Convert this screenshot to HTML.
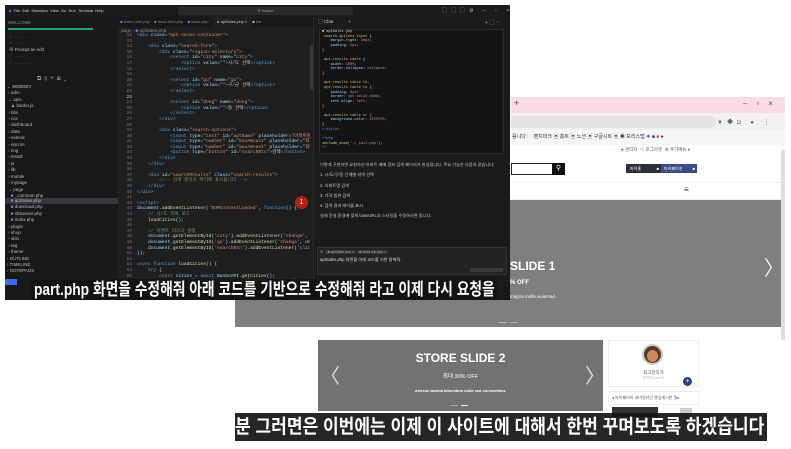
<!DOCTYPE html>
<html><head><meta charset="utf-8"><style>
*{margin:0;padding:0;box-sizing:border-box}
body{width:791px;height:449px;background:#fff;position:relative;overflow:hidden;font-family:"Liberation Sans","Noto Sans CJK KR",sans-serif}
.a{position:absolute}
.code{font-family:"Liberation Mono",monospace;font-size:4.6px;line-height:5.6px;white-space:pre;color:#9cdcfe}
.t{color:#569cd6}.s{color:#ce9178}.c{color:#6a9955}.y{color:#dcdcaa}.w{color:#ccc}.o{color:#d7ba7d}
.sub{background:rgba(20,20,20,.92);color:#fff;font-weight:bold;white-space:nowrap;overflow:hidden}
.sub span{display:inline-block;transform-origin:0 50%}
.tree{font-size:4.5px;color:#bbb;line-height:6.4px;white-space:pre}
</style></head><body>

<div class="a" style="left:511px;top:97px;width:274px;height:16px;background:#f8dbe6"></div>
<div class="a" style="left:514px;top:98px;font-size:9px;color:#444">+</div>
<div class="a" style="left:743px;top:99px;font-size:8px;color:#555;letter-spacing:9px">–▫×</div>
<div class="a" style="left:511px;top:113px;width:274px;height:17px;background:#f1f1f1"></div>
<div class="a" style="left:511px;top:116px;width:205px;height:12px;background:#e4e4e4;border-radius:0 6px 6px 0"></div>
<div class="a" style="left:717px;top:117px;font-size:6px;color:#666;letter-spacing:4px">▼◆◘ ● ⋮</div>
<div class="a" style="left:511px;top:130px;width:274px;height:15px;background:#f6f6f6"></div>
<div class="a" style="left:512px;top:133px;font-size:5px;color:#333">음니다 🗀 벤치마크 ▣ 홈트 ▣ 노션 ▣ 구글시트 ▣ ◉ 모리스탭 <span style="color:#36c">✦</span> <span style="color:#236">■</span> <span style="color:#e46">■</span> <span style="color:#236">●</span></div>
<div class="a" style="left:235px;top:145px;width:546px;height:55px;background:#fff;border-bottom:1px solid #eee"></div>
<div class="a" style="left:621px;top:147px;font-size:4.5px;color:#555"><span style="color:#c33">●</span> 관리자 &nbsp;⇨ 로그아웃 &nbsp;⚙ 추가메뉴 ▾</div>
<div class="a" style="left:511px;top:163px;width:41px;height:12px;border:1px solid #222;border-right:none"></div>
<div class="a" style="left:552px;top:163px;width:13px;height:12px;background:#111;color:#fff;font-size:7px;text-align:center;line-height:12px">⚲</div>
<div class="a" style="left:626px;top:164px;width:35px;height:9px;background:#2a2f3a;color:#fff;font-size:4px;line-height:9px;padding-left:4px">마이홈 <span style="float:right;margin-right:2px">■</span></div>
<div class="a" style="left:661px;top:164px;width:36px;height:9px;background:#3c4a8a;color:#fff;font-size:4px;line-height:9px;padding-left:3px">마이페이지 <span style="float:right;margin-right:2px">■</span></div>
<div class="a" style="left:511px;top:182px;width:270px;height:1px;background:#eee"></div>
<div class="a" style="left:684px;top:185px;font-size:8px;color:#333">≡</div>
<div class="a" style="left:781px;top:150px;width:4px;height:190px;background:#ddd"></div>
<div class="a" style="left:235px;top:200px;width:546px;height:127px;background:#7f7f7f"></div>
<div class="a" style="left:510px;top:259px;font-size:12px;color:#fff;font-weight:bold">SLIDE 1</div>
<div class="a" style="left:510px;top:280px;font-size:6px;color:#fff;font-weight:bold">% OFF</div>
<div class="a" style="left:510px;top:294px;font-size:4.5px;color:#fff">magna mollis euismod.</div>
<div class="a" style="left:764px;top:252px;font-size:20px;color:#eee">〉</div>
<div class="a" style="left:499px;top:322px;width:8px;height:1px;background:#bbb"></div>
<div class="a" style="left:510px;top:322px;width:8px;height:1px;background:#aaa"></div>

<div class="a" style="left:318px;top:340px;width:285px;height:71px;background:#727272"></div>
<div class="a" style="left:318px;top:351px;width:285px;text-align:center;font-size:12px;color:#fff;font-weight:bold">STORE SLIDE 2</div>
<div class="a" style="left:318px;top:372px;width:285px;text-align:center;font-size:5.5px;color:#fff">최대 30% OFF</div>
<div class="a" style="left:318px;top:388px;width:285px;text-align:center;font-size:4px;color:#fff;font-weight:bold">Aenean lacinia bibendum nulla sed consectetur.</div>
<div class="a" style="left:320px;top:360px;font-size:20px;color:#ddd">〈</div>
<div class="a" style="left:585px;top:360px;font-size:20px;color:#ddd">〉</div>
<div class="a" style="left:451px;top:405px;width:7px;height:1px;background:#aaa"></div>
<div class="a" style="left:461px;top:405px;width:7px;height:1px;background:#eee"></div>

<div class="a" style="left:608px;top:340px;width:91px;height:47px;border:1px solid #eee;background:#fff"></div>
<div class="a" style="left:642px;top:344px;width:21px;height:21px;border-radius:50%;background:#5a3a2a;border:2px solid #ccc"></div>
<div class="a" style="left:647px;top:350px;width:11px;height:12px;border-radius:50%;background:#c98a5e"></div>
<div class="a" style="left:608px;top:370px;width:91px;text-align:center;font-size:4.5px;color:#555">최고관리자</div>
<div class="a" style="left:608px;top:376px;width:91px;text-align:center;font-size:3.5px;color:#aaa">관리자 Level 1</div>
<div class="a" style="left:683px;top:377px;width:9px;height:9px;border-radius:50%;background:#2f3f7e;color:#fff;font-size:7px;text-align:center;line-height:9px">+</div>
<div class="a" style="left:608px;top:391px;width:91px;height:14px;border:1px solid #eee;font-size:4px;color:#555;line-height:12px;padding-left:3px">◂ 마이페이지 내미일라인 관심게시판 질▸</div>
<div class="a" style="left:612px;top:407px;width:46px;height:10px;background:#333"></div>
<div class="a" style="left:680px;top:408px;width:12px;height:10px;background:#ccc"></div>

<div class="a" style="left:5px;top:5px;width:505px;height:295px;background:#1f1f1f"></div>
<div class="a" style="left:5px;top:5px;width:505px;height:12px;background:#1b1b1b;font-size:4px;color:#ccc;line-height:12px;padding-left:4px"><span style="color:#3c8cf0">■</span>&nbsp; File &nbsp;Edit &nbsp;Selection &nbsp;View &nbsp;Go &nbsp;Run &nbsp;Terminal &nbsp;Help</div>
<div class="a" style="left:178px;top:7px;width:175px;height:8px;background:#2a2a2a;border-radius:2px;font-size:4px;color:#999;text-align:center;line-height:8px">⚲ fodaco</div>
<div class="a" style="left:442px;top:7px;font-size:5px;color:#bbb;letter-spacing:4px">▢▢▢⚙ – ▫ ×</div>
<div class="a" style="left:5px;top:17px;width:113px;height:270px;background:#181818"></div>
<div class="a" style="left:8px;top:28px;width:85px;height:1.5px;background:#2aa37a"></div>
<div class="a tree" style="left:8px;top:20px;color:#888">WELCOME</div>
<div class="a tree" style="left:9px;top:34px;color:#555">✓ ...... ......<br>✓ ........<br><span style="color:#bbb">⊕ Prompt an edit</span><br>✓ ........<br>✓ ........ ........</div>
<div class="a" style="left:37px;top:76px;font-size:6px;color:#aaa;letter-spacing:3px">⧉⚲⑂⊞⌄</div>
<div class="a tree" style="left:7px;top:84px">⌄ WEBDEV
 › adm
 ⌄ apis
   ▲ banbo.js
 › bbs
 › css
 › dashboard
 › data
 › extend
 › epcom
 › img
 › install
 › js
 › lib
 › mobile
 › mypage
 ⌄ page
   <span style="color:#a074c4">■</span> _common.php</div>
<div class="a" style="left:5px;top:198px;width:113px;height:6px;background:#37373d"></div>
<div class="a tree" style="left:7px;top:198px">   <span style="color:#a074c4">■</span> aptSales.php
   <span style="color:#a074c4">■</span> download.php
   <span style="color:#a074c4">■</span> sbbanner.php
   <span style="color:#a074c4">■</span> index.php
 › plugin
 › shop
 › skin
 › tag
 › theme
› OUTLINE
› TIMELINE
› NOTEPADS</div>
<div class="a" style="left:118px;top:17px;width:195px;height:10px;background:#181818;font-size:4px;color:#888;line-height:10px;white-space:nowrap;overflow:hidden">&nbsp; <span style="color:#a074c4">■</span> index.html.php &nbsp;&nbsp; <span style="color:#a074c4">■</span> head.html.php &nbsp;&nbsp; <span style="color:#a074c4">■</span> index.php &nbsp;&nbsp; <span style="background:#1f1f1f;color:#ccc;padding:3px 4px"><span style="color:#a074c4">■</span> aptSales.php ×</span> <span style="color:#e2c08d">■</span> bar</div>
<div class="a code" style="left:121px;top:28px;color:#888;font-family:'Liberation Sans'">page › <span style="color:#a074c4">■</span> aptSales.php</div>
<div class="a code" style="left:120px;top:33px;color:#6e7681;text-align:right;width:12px">12
13
14
15
16
17
18
19
20
21
22
<span style="color:#ccc">23</span>
24
25
26
27
28
29
30
31
32
33
34
35
36
37
38
39
40
41
42
43
44
45
46
47
48
49
50
51
52
53
54
55</div>
<div class="a code" style="left:137px;top:33px;width:173px;overflow:hidden"><span class="t">&lt;div</span> class=<span class="s">"apt-sales-container"</span><span class="t">&gt;</span>

    <span class="t">&lt;div</span> class=<span class="s">"search-form"</span><span class="t">&gt;</span>
        <span class="t">&lt;div</span> class=<span class="s">"region-selectors"</span><span class="t">&gt;</span>
            <span class="t">&lt;select</span> id=<span class="s">"city"</span> name=<span class="s">"city"</span><span class="t">&gt;</span>
                <span class="t">&lt;option</span> value=<span class="s">""</span><span class="t">&gt;</span><span class="w">시/도 선택</span><span class="t">&lt;/option&gt;</span>
            <span class="t">&lt;/select&gt;</span>

            <span class="t">&lt;select</span> id=<span class="s">"gu"</span> name=<span class="s">"gu"</span><span class="t">&gt;</span>
                <span class="t">&lt;option</span> value=<span class="s">""</span><span class="t">&gt;</span><span class="w">구/군 선택</span><span class="t">&lt;/option&gt;</span>
            <span class="t">&lt;/select&gt;</span>

            <span class="t">&lt;select</span> id=<span class="s">"dong"</span> name=<span class="s">"dong"</span><span class="t">&gt;</span>
                <span class="t">&lt;option</span> value=<span class="s">""</span><span class="t">&gt;</span><span class="w">동 선택</span><span class="t">&lt;/option&gt;</span>
            <span class="t">&lt;/select&gt;</span>
        <span class="t">&lt;/div&gt;</span>

        <span class="t">&lt;div</span> class=<span class="s">"search-options"</span><span class="t">&gt;</span>
            <span class="t">&lt;input</span> type=<span class="s">"text"</span> id=<span class="s">"aptName"</span> placeholder=<span class="s">"아파트명"</span><span class="t">&gt;</span>
            <span class="t">&lt;input</span> type=<span class="s">"number"</span> id=<span class="s">"minAmount"</span> placeholder=<span class="s">"최소금액"</span><span class="t">&gt;</span>
            <span class="t">&lt;input</span> type=<span class="s">"number"</span> id=<span class="s">"maxAmount"</span> placeholder=<span class="s">"최대금액"</span><span class="t">&gt;</span>
            <span class="t">&lt;button</span> type=<span class="s">"button"</span> id=<span class="s">"searchBtn"</span><span class="t">&gt;</span><span class="w">검색</span><span class="t">&lt;/button&gt;</span>
        <span class="t">&lt;/div&gt;</span>
    <span class="t">&lt;/div&gt;</span>

    <span class="t">&lt;div</span> id=<span class="s">"searchResults"</span> class=<span class="s">"search-results"</span><span class="t">&gt;</span>
        <span class="c">&lt;!-- 검색 결과가 여기에 표시됩니다 --&gt;</span>
    <span class="t">&lt;/div&gt;</span>
<span class="t">&lt;/div&gt;</span>

<span class="t">&lt;script&gt;</span>
document.<span class="y">addEventListener</span>(<span class="s">'DOMContentLoaded'</span>, <span class="t">function</span>() {
    <span class="c">// 시/도 목록 로드</span>
    <span class="y">loadCities</span>();

    <span class="c">// 이벤트 리스너 설정</span>
    document.<span class="y">getElementById</span>(<span class="s">'city'</span>).<span class="y">addEventListener</span>(<span class="s">'change'</span>, onCityChange);
    document.<span class="y">getElementById</span>(<span class="s">'gu'</span>).<span class="y">addEventListener</span>(<span class="s">'change'</span>, onGuChange);
    document.<span class="y">getElementById</span>(<span class="s">'searchBtn'</span>).<span class="y">addEventListener</span>(<span class="s">'click'</span>, searchApts
});

<span class="t">async function</span> <span class="y">loadCities</span>() {
    <span class="t">try</span> {
        <span class="t">const</span> cities = <span class="t">await</span> BanboAPI.<span class="y">getCities</span>();
        <span class="t">const</span> citySelect = document.<span class="y">getElementById</span>(<span class="s">'city'</span>);</div>
<div class="a" style="left:295px;top:196px;width:13px;height:13px;border-radius:50%;background:#b2221b;color:#fff;font-size:7px;text-align:center;line-height:13px">1</div>
<div class="a" style="left:310px;top:45px;width:3px;height:45px;background:#3a3a3a"></div>
<div class="a" style="left:313px;top:17px;width:197px;height:270px;background:#1b1b1b;border-left:1px solid #2b2b2b"></div>
<div class="a" style="left:318px;top:19px;font-size:4.5px;color:#ccc">▢ Chat &nbsp;&nbsp;&nbsp;&nbsp;&nbsp;&nbsp;&nbsp;&nbsp;&nbsp;&nbsp; ×</div>
<div class="a" style="left:485px;top:19px;font-size:5px;color:#aaa">+ ▢ ⋯</div>
<div class="a" style="left:319px;top:29px;width:185px;height:125px;background:#141414;border:1px solid #2a2a2a"></div>
<div class="a code" style="left:322px;top:30px;font-size:3.6px;line-height:4.65px"><span class="w">■ aptSales.php</span>
<span class="o">.search-options input</span> {
    margin-right: <span class="s">10px</span>;
    padding: <span class="s">5px</span>;
}

<span class="o">.apt-results table</span> {
    width: <span class="s">100%</span>;
    border-collapse: <span class="s">collapse</span>;
}

<span class="o">.apt-results table th</span>,
<span class="o">.apt-results table td</span> {
    padding: <span class="s">8px</span>;
    border: <span class="s">1px solid #ddd</span>;
    text-align: <span class="s">left</span>;
}

<span class="o">.apt-results table tr</span> {
    background-color: <span class="s">#f5f5f5</span>;
}
<span class="t">&lt;/style&gt;</span>

<span class="t">&lt;?php</span>
<span class="y">include_once</span>(<span class="s">'./_tail.php'</span>);
<span class="t">?&gt;</span></div>
<div class="a" style="left:320px;top:160px;font-size:4.2px;line-height:10.3px;color:#c8c8c8;white-space:pre">이렇게 구현하면 요청하신 아파트 매매 정보 검색 페이지가 완성됩니다. 주요 기능은 다음과 같습니다:
1. 시/도/구/동 단계별 지역 선택
2. 아파트명 검색
3. 가격 범위 검색
4. 검색 결과 테이블 표시
실제 운영 환경에 맞게 baseURL과 스타일을 수정하시면 됩니다.</div>
<div class="a" style="left:317px;top:247px;width:190px;height:28px;background:#232323;border:1px solid #333;border-radius:2px"></div>
<div class="a" style="left:320px;top:250px;font-size:3.5px;color:#aaa">⊕ &nbsp;<span style="background:#333;padding:0 2px">■ aptSales.php ×</span> <span style="background:#333;padding:0 2px">■ head.sub.php ×</span></div>
<div class="a" style="left:320px;top:257px;font-size:4.2px;color:#ddd">aptSales.php 화면을 아래 코드를 기반 참해줘.</div>
<div class="a" style="left:470px;top:268px;width:33px;height:4px;background:#3a3a3a"></div>
<div class="a" style="left:5px;top:287px;width:505px;height:13px;background:#181818"></div>
<div class="a" style="left:5px;top:279px;width:12px;height:6px;background:#3c6ee0"></div>

<div class="a sub" style="left:31px;top:279px;width:467px;height:21px;font-size:17px;line-height:21px;padding-left:3px"><span style="transform:scaleX(0.81)">part.php 화면을 수정해줘 아래 코드를 기반으로 수정해줘 라고 이제 다시 요청을</span></div>
<div class="a sub" style="left:235px;top:413px;width:532px;height:28px;font-size:19.5px;line-height:28px"><span style="transform:scaleX(0.875)">분 그러면은 이번에는 이제 이 사이트에 대해서 한번 꾸며보도록 하겠습니다</span></div>
</body></html>
